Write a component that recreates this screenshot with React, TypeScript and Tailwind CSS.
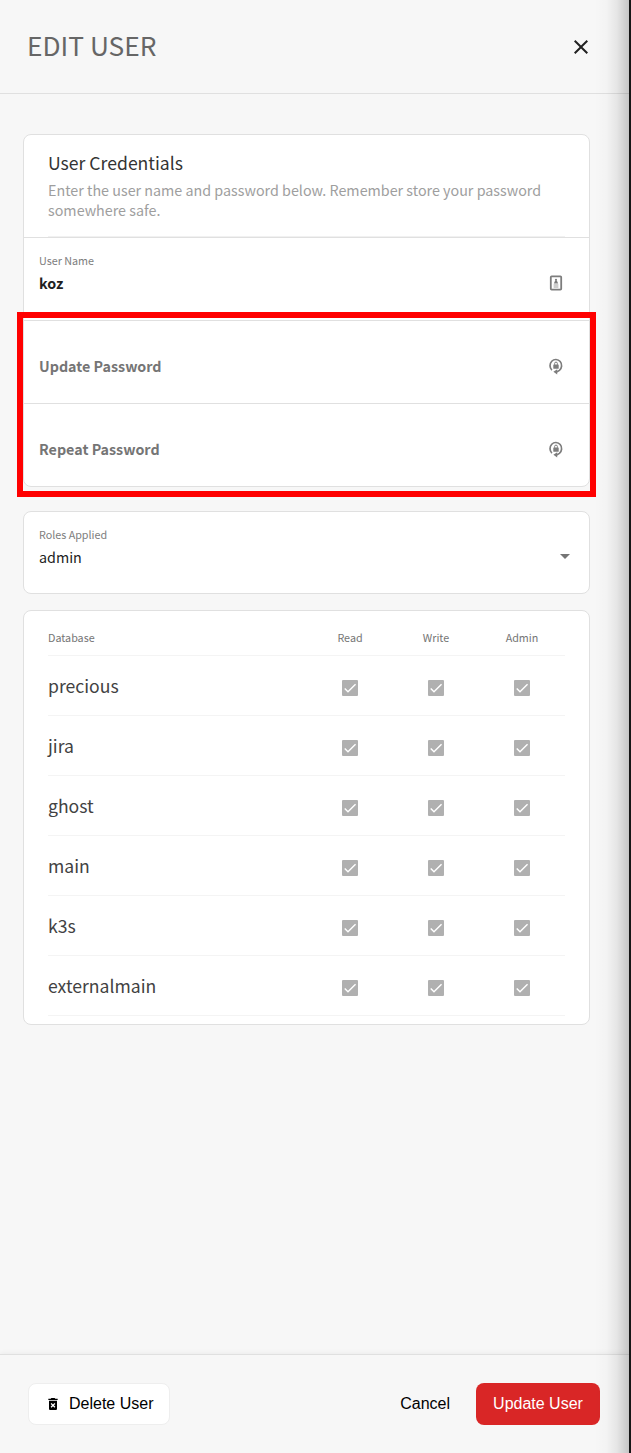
import type { ReactNode } from "react";
import { MdArrowDropDown, MdClose, MdDeleteForever } from "react-icons/md";

const databases = ["precious", "jira", "ghost", "main", "k3s", "externalmain"];
const permissions = ["Read", "Write", "Admin"];

function UserBadgeIcon() {
  return (
    <svg viewBox="0 0 16 16" className="size-4 text-[#7d7d7d]" fill="none" stroke="currentColor">
      <rect x="2.8" y="1.4" width="10.4" height="13.2" rx="0.8" strokeWidth="1.8" />
      <circle cx="8" cy="4.9" r="1.1" fill="currentColor" stroke="none" />
      <path d="M5.8 8.5 7 6h2l1.2 2.5z" fill="currentColor" stroke="none" />
      <path d="M5.6 10h4.8M5.6 12h4.8" strokeWidth="1.1" opacity="0.75" />
    </svg>
  );
}

function PasswordResetIcon() {
  return (
    <svg viewBox="0 0 16 18" className="h-[18px] w-4 -translate-y-px text-[#7d7d7d]" fill="none" stroke="currentColor">
      <path d="M3.9 13.1A5.8 6.1 0 1 1 11.4 13.4L8.6 14.9" strokeWidth="1.7" />
      <path d="M5.4 14.8 9.2 12.2v5.4z" fill="currentColor" stroke="none" />
      <rect x="5.3" y="7.5" width="5.4" height="4.2" rx="0.5" fill="currentColor" stroke="none" />
      <path d="M6.6 7.8V6.5a1.4 1.4 0 0 1 2.8 0v1.3" strokeWidth="1" />
    </svg>
  );
}

function Checkbox({ label }: { label: string }) {
  return (
    <span role="checkbox" aria-checked="true" aria-disabled="true" aria-label={label} className="block size-4 rounded-[1px] bg-[#b0b0b0]">
      <svg viewBox="0 0 24 24" className="size-4" fill="none" stroke="#fff" strokeWidth="2.13">
        <path d="M4.1 12.7 9 17.6 20.3 6.3" />
      </svg>
    </span>
  );
}

function PasswordField({ label, children }: { label: string; children?: ReactNode }) {
  return (
    <div className="flex h-[83px] items-center justify-between border-t border-[#e0e0e0] pr-[25px] pl-[15px] pt-[9px]">
      <span className="pb-[2px] text-[14.3px] leading-5 font-bold text-[#757575]">{label}</span>
      {children}
    </div>
  );
}

export default function App() {
  return (
    <div className="relative flex h-[1453px] w-[631px] flex-col overflow-hidden border-r-2 border-[#161616] bg-[#f7f7f7] font-['Noto_Sans_CJK_SC','Noto_Sans',sans-serif]">
      <header className="flex h-[94px] shrink-0 items-center justify-between border-b border-[#e0e0e0] pr-9 pl-[27px]">
        <h1 className="pb-[3px] text-[26.3px] leading-9 text-[#666]">EDIT USER</h1>
        <button aria-label="Close"><MdClose className="size-6 text-[#212121]" /></button>
      </header>

      <main className="flex flex-1 flex-col pt-10 pr-[39px] pl-[23px]">
        <section className="relative h-[353px] rounded-lg border border-[#e0e0e0] bg-white">
          <div className="h-[102px] px-6 pt-4">
            <div className="h-[86px] border-b border-[#f1f1f1]">
              <h2 className="text-[17.6px] leading-6 text-[#333]">User Credentials</h2>
              <p className="mt-[5px] text-[14.32px] leading-5 text-[#9e9e9e]">
                Enter the user name and password below. Remember store your password somewhere safe.
              </p>
            </div>
          </div>
          <div className="flex h-[83px] justify-between border-t border-[#e0e0e0] pr-[25px] pl-[15px] pt-[15px]">
            <div>
              <div className="text-[10.75px] leading-4 text-[#7d7d7d]">User Name</div>
              <div className="mt-1 text-[14.3px] leading-5 font-bold text-[#212121]">koz</div>
            </div>
            <div className="pt-[22px]"><UserBadgeIcon /></div>
          </div>
          <PasswordField label="Update Password"><PasswordResetIcon /></PasswordField>
          <PasswordField label="Repeat Password"><PasswordResetIcon /></PasswordField>
          <div className="pointer-events-none absolute -top-px -left-px mt-[178px] -ml-[6px] h-[185px] w-[579px] border-6 border-[#ff0000]" />
        </section>

        <section className="mt-6 flex h-[83px] justify-between rounded-lg border border-[#e0e0e0] bg-white pt-[15px] pr-3 pl-[15px]">
          <div>
            <div className="text-[10.75px] leading-4 text-[#7d7d7d]">Roles Applied</div>
            <div className="mt-1 text-[14.3px] leading-5 text-[#212121]">admin</div>
          </div>
          <MdArrowDropDown className="mt-[17px] size-6 text-[#757575]" />
        </section>

        <section className="mt-4 h-[415px] rounded-lg border border-[#e0e0e0] bg-white px-6">
          <div className="grid h-[45px] grid-cols-[259px_86px_86px_86px] items-center border-b border-[#f4f4f4] pt-[11px] text-[10.75px] text-[#757575]">
            <span>Database</span>
            {permissions.map((permission) => (
              <span key={permission} className="text-center">{permission}</span>
            ))}
          </div>
          {databases.map((database) => (
            <div key={database} className="grid h-[60px] grid-cols-[259px_86px_86px_86px] items-center border-b border-[#f4f4f4]">
              <span className="pt-px text-[17.6px] leading-6 text-[#424242]">{database}</span>
              {permissions.map((permission) => (
                <div key={permission} className="flex justify-center pt-[5px]">
                  <Checkbox label={`${database} ${permission}`} />
                </div>
              ))}
            </div>
          ))}
        </section>
      </main>

      <footer className="flex h-[99px] shrink-0 items-center justify-between border-t border-[#e0e0e0] bg-[#f7f7f7] pr-[29px] pl-7 font-['Liberation_Sans',sans-serif] text-[16px] text-black shadow-[0_-1px_5px_rgba(0,0,0,0.05)]">
        <button className="flex h-[42px] w-[142px] items-center gap-2 rounded-lg border border-[#eee] bg-white pl-4">
          <MdDeleteForever className="size-4" />
          <span>Delete User</span>
        </button>
        <div className="flex items-center gap-[26px]">
          <button>Cancel</button>
          <button className="h-[42px] w-[124px] rounded-lg bg-[#d92626] text-white">Update User</button>
        </div>
      </footer>

      <div className="pointer-events-none absolute inset-y-0 right-0 w-[35px] bg-[linear-gradient(to_right,transparent,rgba(0,0,0,0.015)_35%,rgba(0,0,0,0.07)_65%,rgba(0,0,0,0.2))]" />
    </div>
  );
}
